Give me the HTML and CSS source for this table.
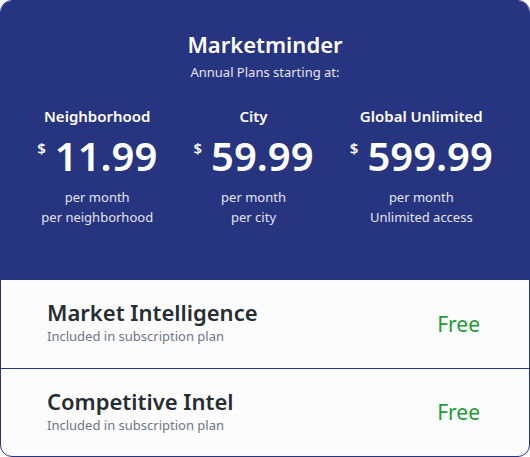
FILE: index.html
```html
<!DOCTYPE html>
<html>
<head>
<meta charset="utf-8">
<link rel="stylesheet" href="styles.css">
</head>
<body>
<div class="card">
  <header class="hero">
    <h1 class="brand">Marketminder</h1>
    <p class="tagline">Annual Plans starting at:</p>
    <div class="plans">
      <div class="plan">
        <h2 class="plan-name">Neighborhood</h2>
        <div class="price"><span class="cur">$</span><span class="amt">11.99</span></div>
        <p class="terms">per month<br>per neighborhood</p>
      </div>
      <div class="plan">
        <h2 class="plan-name">City</h2>
        <div class="price"><span class="cur">$</span><span class="amt">59.99</span></div>
        <p class="terms">per month<br>per city</p>
      </div>
      <div class="plan">
        <h2 class="plan-name">Global Unlimited</h2>
        <div class="price"><span class="cur">$</span><span class="amt">599.99</span></div>
        <p class="terms">per month<br>Unlimited access</p>
      </div>
    </div>
  </header>
  <div class="feature">
    <div class="feature-text">
      <h3 class="feature-name">Market Intelligence</h3>
      <p class="feature-sub">Included in subscription plan</p>
    </div>
    <span class="feature-price">Free</span>
  </div>
  <div class="feature">
    <div class="feature-text">
      <h3 class="feature-name">Competitive Intel</h3>
      <p class="feature-sub">Included in subscription plan</p>
    </div>
    <span class="feature-price">Free</span>
  </div>
</div>
</body>
</html>
```
FILE: styles.css
```css
* { box-sizing: border-box; }
html, body { margin: 0; padding: 0; }
body {
  font-family: "Noto Sans", "Open Sans", sans-serif;
  background: #ffffff;
  width: 530px;
  height: 457px;
}
.card {
  width: 530px;
  height: 457px;
  border: 1px solid #27347f;
  border-radius: 12px;
  overflow: hidden;
  background: #fcfcfd;
  display: flex;
  flex-direction: column;
}
.hero {
  background: #27347f;
  color: #ffffff;
  height: 279px;
  flex: none;
  padding-top: 28px;
  text-align: center;
}
.brand {
  margin: 0;
  font-size: 22px;
  line-height: 30px;
  font-weight: 600;
}
.tagline {
  margin: 4px 0 0;
  font-size: 13px;
  line-height: 18px;
  color: #e3e5f0;
}
.plans {
  display: flex;
  justify-content: space-evenly;
  margin-top: 24px;
}
.plan { text-align: center; }
.plan-name {
  margin: 0;
  font-size: 15px;
  line-height: 22px;
  font-weight: 600;
}
.price {
  display: flex;
  justify-content: center;
  align-items: flex-start;
  margin-top: 5px;
  height: 55px;
}
.cur {
  font-size: 15px;
  font-weight: 600;
  line-height: 18px;
  margin-top: 7px;
  margin-right: 9px;
}
.amt {
  font-size: 40px;
  font-weight: 600;
  line-height: 48px;
}
.terms {
  margin: 0;
  font-size: 13px;
  line-height: 20px;
  color: #e3e5f0;
}
.feature {
  flex: 1;
  display: flex;
  align-items: center;
  justify-content: space-between;
  padding: 0 49px 3px 46px;
  border-bottom: 1px solid #27347f;
}
.feature:last-child { border-bottom: none; }
.feature-name {
  margin: 0;
  font-size: 22px;
  line-height: 28px;
  font-weight: 600;
  color: #262d33;
}
.feature-sub {
  margin: 0;
  font-size: 13px;
  line-height: 20px;
  color: #6b7785;
}
.feature-price {
  font-size: 21px;
  color: #1e9a35;
  margin-top: 3px;
}
```
